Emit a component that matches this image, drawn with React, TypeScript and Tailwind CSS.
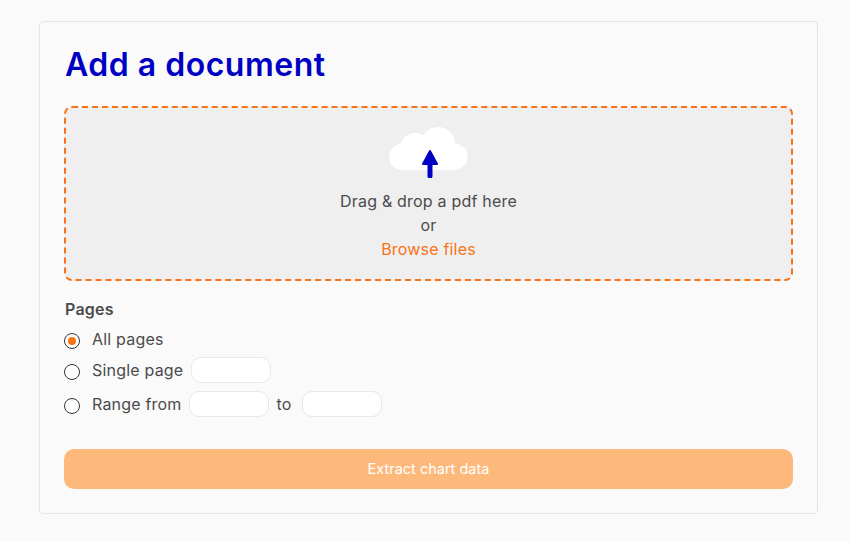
const font = { fontFamily: '"Inter", "Noto Sans", sans-serif' };

function Radio({ checked }: { checked?: boolean }) {
  return (
    <span className="mt-[4px] flex h-4 w-4 shrink-0 items-center justify-center rounded-full border border-[#333] bg-white">
      {checked && <span className="h-2 w-2 rounded-full bg-[#f97316]" />}
    </span>
  );
}

function Field({ w = "w-20" }: { w?: string }) {
  return <span className={`block h-[26px] ${w} rounded-[10px] border border-[#e8e8e8] bg-white`} />;
}

export default function App() {
  return (
    <div className="h-[542px] overflow-hidden bg-[#fafafa] pt-[21px] pl-[39px]" style={font}>
      <div className="h-[493px] w-[779px] rounded border border-[#e5e5e5] bg-[#fafafa] px-6 pt-[21px]">
        <h1 className="ml-[1px] text-[32px] leading-[44px] font-semibold tracking-[0.5px] text-[#0000c4]">Add a document</h1>
        <div className="mt-[19px] flex h-[175px] w-[729px] flex-col items-center rounded-lg border-2 border-dashed border-[#f97316] bg-[#efefef] pt-[18px]">
          <svg width="80" height="52" viewBox="0 0 80 52" className="ml-[1px]">
            <g fill="#fff">
              <circle cx="13.5" cy="30.7" r="13.3" />
              <circle cx="26" cy="22" r="15" />
              <circle cx="49" cy="18" r="17" />
              <circle cx="65.3" cy="30.7" r="13.3" />
              <rect x="14" y="22" width="52" height="22" />
            </g>
            <path d="M41 38V50" stroke="#0000c4" strokeWidth="5" strokeLinecap="round" fill="none" />
            <path d="M41 25l7 13H34z" fill="#0000c4" stroke="#0000c4" strokeWidth="2" strokeLinejoin="round" />
          </svg>
          <div className="mt-[11px] text-center text-base leading-6 tracking-[0.2px] text-[#4b4b4b]">
            <p>Drag &amp; drop a pdf here</p>
            <p>or</p>
            <p className="text-[#f97316]">Browse files</p>
          </div>
        </div>
        <div className="mt-[16px] text-base leading-6 tracking-[0.2px] text-[#4b4b4b]">
          <p className="ml-[1px] font-semibold">Pages</p>
          <div className="mt-[6px] flex h-6 items-center gap-3"><Radio checked /><span>All pages</span></div>
          <div className="mt-[6px] flex h-[26px] items-center"><span className="mr-3"><Radio /></span><span className="mr-2">Single page</span><Field /></div>
          <div className="mt-2 flex h-[26px] items-center"><span className="mr-3"><Radio /></span><span className="mr-[7px]">Range from</span><Field /><span className="mr-[10px] ml-2">to</span><Field /></div>
        </div>
        <button className="mt-8 flex h-10 w-[729px] items-center justify-center rounded-[10px] bg-[#fdb87c] text-[14.5px] font-normal text-white">Extract chart data</button>
      </div>
    </div>
  );
}
